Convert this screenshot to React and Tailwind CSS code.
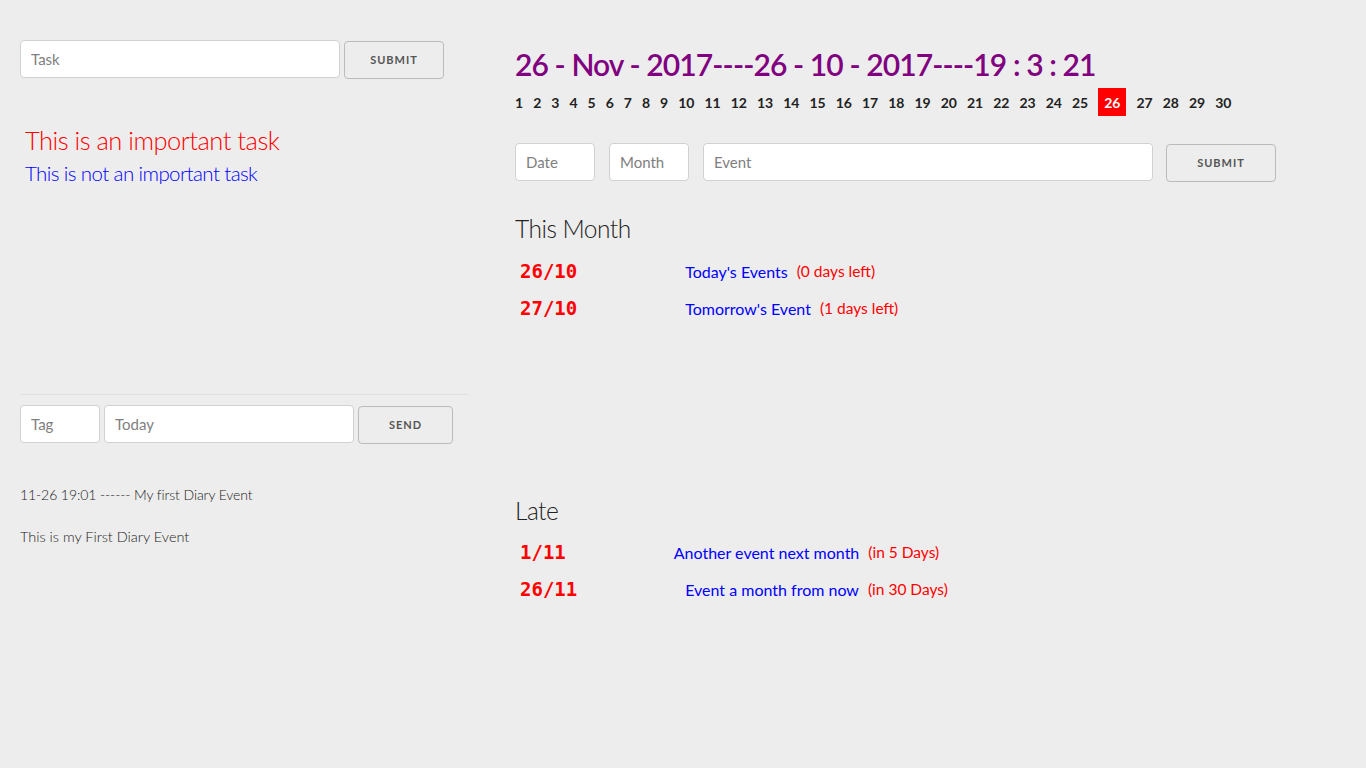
import React from "react";

const font = { fontFamily: "Lato, 'Open Sans', sans-serif" };

const inputCls =
  "h-[38px] border border-[#d1d1d1] rounded-[4px] bg-white px-[10px] text-[15px] text-[#333] placeholder:text-[#808080] outline-none";
const btnCls =
  "h-[38px] border border-[#bbb] rounded-[4px] bg-transparent text-[11px] font-bold tracking-[1px] uppercase text-[#555]";

function EventRow({ date, title, left }) {
  return (
    <div className="h-[37px] flex items-center">
      <span
        className="pl-[5px] text-[19px] font-bold text-[#ff0000]"
        style={{ fontFamily: "'DejaVu Sans Mono', monospace" }}
      >
        {date}
      </span>
      <span className="ml-[108px] text-[16px] text-[#0000ff]">{title}</span>
      <span className="ml-[9px] text-[15.5px] text-[#ff0000]">{left}</span>
    </div>
  );
}

export default function App() {
  const days = Array.from({ length: 30 }, (_, i) => i + 1);
  return (
    <div className="min-h-[768px] w-full bg-[#ededed]" style={font}>
      <div className="flex">
        {/* Left column */}
        <div className="ml-[20px] w-[449px] flex flex-col pt-[40px]">
          <div className="flex items-start gap-[4px]">
            <input className={`${inputCls} w-[320px]`} placeholder="Task" />
            <button className={`${btnCls} w-[100px] mt-[1px]`}>Submit</button>
          </div>
          <div className="mt-[45px] pl-[5px] text-[25.5px] leading-[33px] font-light text-[#ff0000] tracking-[-0.5px]">
            This is an important task
          </div>
          <div className="mt-[3px] pl-[5px] text-[20.5px] leading-[27px] font-light text-[#0000ff] tracking-[-0.6px]">
            This is not an important task
          </div>
          <div className="mt-[207px] border-t border-[#e1e1e1] w-[449px]" />
          <div className="mt-[10px] flex items-start gap-[4px]">
            <input className={`${inputCls} w-[80px]`} placeholder="Tag" />
            <input className={`${inputCls} w-[250px]`} placeholder="Today" />
            <button className={`${btnCls} w-[95px] mt-[1px]`}>Send</button>
          </div>
          <div className="mt-[40px] text-[14px] leading-[21px] font-light text-[#222] tracking-[-0.1px]">
            11-26 19:01 ------ My first Diary Event
          </div>
          <div className="mt-[21px] text-[14.5px] leading-[21px] font-light text-[#222] tracking-[0px]">
            This is my First Diary Event
          </div>
        </div>

        {/* Right column */}
        <div className="ml-[46px] flex flex-col pt-[45px]">
          <div className="text-[30px] leading-[39px] font-semibold text-[#800080] tracking-[-0.9px]">
            26 - Nov - 2017----26 - 10 - 2017----19 : 3 : 21
          </div>
          <div className="mt-[4px] flex items-center gap-[10px] h-[28px] text-[14px] font-bold text-[#222]">
            {days.map((d) =>
              d === 26 ? (
                <span
                  key={d}
                  className="h-[28px] px-[6px] flex items-center bg-[#ff0000] text-white"
                >
                  {d}
                </span>
              ) : (
                <span key={d}>{d}</span>
              )
            )}
          </div>
          <div className="mt-[27px] flex items-start">
            <input className={`${inputCls} w-[80px]`} placeholder="Date" />
            <input className={`${inputCls} w-[80px] ml-[14px]`} placeholder="Month" />
            <input className={`${inputCls} w-[450px] ml-[14px]`} placeholder="Event" />
            <button className={`${btnCls} w-[110px] ml-[13px] mt-[1px]`}>Submit</button>
          </div>
          <div className="mt-[31px] text-[24.5px] leading-[32px] font-light text-[#222] tracking-[-0.5px]">
            This Month
          </div>
          <div className="mt-[8px] flex flex-col">
            <EventRow date="26/10" title="Today's Events" left="(0 days left)" />
            <EventRow date="27/10" title="Tomorrow's Event" left="(1 days left)" />
          </div>
          <div className="mt-[168px] text-[24.5px] leading-[32px] font-light text-[#222] tracking-[-0.5px]">
            Late
          </div>
          <div className="mt-[7px] flex flex-col">
            <EventRow date="1/11" title="Another event next month" left="(in 5 Days)" />
            <EventRow date="26/11" title="Event a month from now" left="(in 30 Days)" />
          </div>
        </div>
      </div>
    </div>
  );
}
